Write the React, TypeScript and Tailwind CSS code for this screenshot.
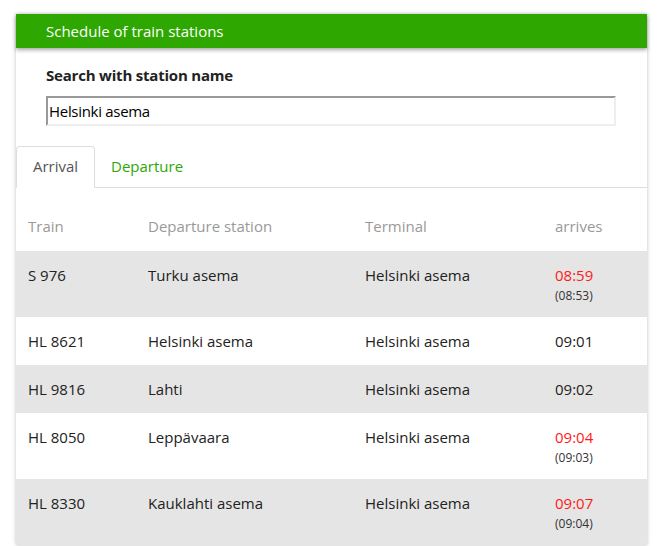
import React, { useState } from "react";

type Row = {
  train: string;
  from: string;
  to: string;
  time: string;
  planned?: string;
};

const rows: Row[] = [
  { train: "S 976", from: "Turku asema", to: "Helsinki asema", time: "08:59", planned: "08:53" },
  { train: "HL 8621", from: "Helsinki asema", to: "Helsinki asema", time: "09:01" },
  { train: "HL 9816", from: "Lahti", to: "Helsinki asema", time: "09:02" },
  { train: "HL 8050", from: "Leppävaara", to: "Helsinki asema", time: "09:04", planned: "09:03" },
  { train: "HL 8330", from: "Kauklahti asema", to: "Helsinki asema", time: "09:07", planned: "09:04" },
];

function App() {
  const [Tab, setTab] = useState<"arrival" | "departure">("arrival");
  const [Query, setQuery] = useState("Helsinki asema");
  return (
    <div
      className="bg-white min-h-[546px] pt-[14px] px-4 text-[15px] text-[#222]"
      style={{ fontFamily: '"Open Sans", "Noto Sans", sans-serif' }}
    >
      <div className="w-[631px] bg-white shadow-[0_0_4px_rgba(0,0,0,0.25)]">
        <div className="h-[34px] bg-[#2ea700] text-white pl-[30px] flex items-center shadow-[0_2px_4px_rgba(0,0,0,0.35)] relative">
          Schedule of train stations
        </div>
        <div className="px-[30px] pt-[16px] pb-[20px]">
          <label className="block font-bold text-[15px] mb-[9px] tracking-[-0.2px]">
            Search with station name
          </label>
          <input
            value={Query}
            onChange={(e) => setQuery(e.target.value)}
            className="w-[570px] h-[30px] border-2 border-t-[#999] border-l-[#999] border-r-[#eee] border-b-[#eee] pl-[1px] outline-none text-[15px] text-black tracking-[-0.3px]"
          />
        </div>
        <div className="flex border-b border-[#ddd] h-[42px]">
          <button
            onClick={() => setTab("arrival")}
            className="w-[79px] h-[42px] border border-[#ddd] border-b-white rounded-t-[4px] bg-white text-[#555]"
          >
            Arrival
          </button>
          <button
            onClick={() => setTab("departure")}
            className="px-4 h-[41px] text-[#2ea700]"
          >
            Departure
          </button>
        </div>
        <table className="w-full border-collapse">
          <thead>
            <tr className="h-[63px] text-[#999] text-left">
              <th className="font-normal pl-3 w-[132px] pt-[14px]">Train</th>
              <th className="font-normal w-[217px] pt-[14px]">Departure station</th>
              <th className="font-normal w-[190px] pt-[14px]">Terminal</th>
              <th className="font-normal pt-[14px]">arrives</th>
            </tr>
          </thead>
          <tbody>
            {rows.map((r, i) => (
              <tr key={r.train} className={i % 2 === 0 ? "bg-[#e5e5e5]" : "bg-white"}>
                <td className="pl-3 py-3 align-top leading-6">{r.train}</td>
                <td className="py-3 align-top leading-6">{r.from}</td>
                <td className="py-3 align-top leading-6">{r.to}</td>
                <td className="py-3 align-top leading-6">
                  <div className={r.planned ? "text-[#ff1a1a]" : ""}>{r.time}</div>
                  {r.planned && (
                    <div className="text-[12px] leading-[18px] text-[#333]">({r.planned})</div>
                  )}
                </td>
              </tr>
            ))}
          </tbody>
        </table>
      </div>
    </div>
  );
}

export default App;
